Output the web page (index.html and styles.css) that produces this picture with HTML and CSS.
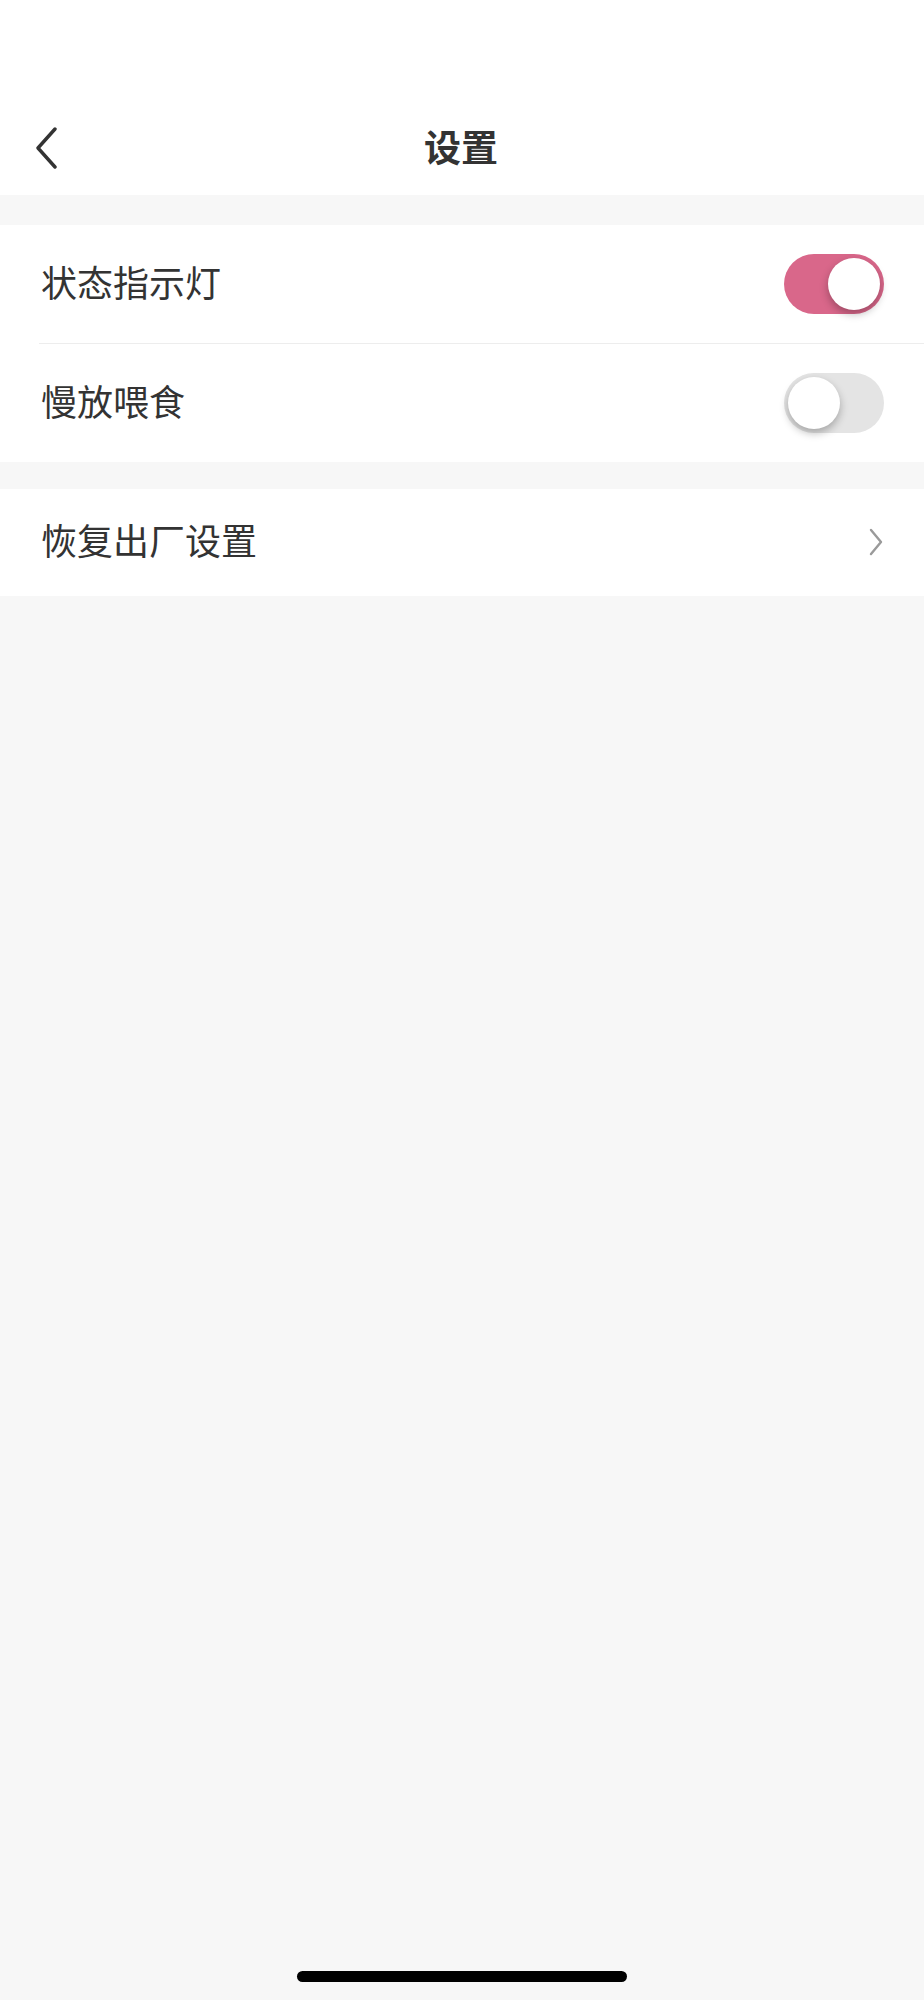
FILE: index.html
```html
<!DOCTYPE html>
<html lang="zh-CN">
<head>
<meta charset="utf-8">
<title>设置</title>
<link rel="stylesheet" href="styles.css">
</head>
<body>
<div class="screen">
  <header class="header">
    <div class="statusbar"></div>
    <nav class="nav">
      <span class="back">
        <svg width="24" height="42" viewBox="0 0 24 42"><polyline points="20,2 3,21 20,40" fill="none" stroke="#333" stroke-width="3.4" stroke-linecap="round" stroke-linejoin="round"/></svg>
      </span>
      <h1 class="title">设置</h1>
    </nav>
  </header>

  <section class="group group-first">
    <div class="row row-tall">
      <span class="label">状态指示灯</span>
      <span class="toggle on"><span class="knob"></span></span>
    </div>
    <div class="divider"></div>
    <div class="row row-tall">
      <span class="label">慢放喂食</span>
      <span class="toggle"><span class="knob"></span></span>
    </div>
  </section>

  <section class="group group-second">
    <div class="row row-short">
      <span class="label">恢复出厂设置</span>
      <span class="chev">
        <svg width="16" height="28" viewBox="0 0 16 28"><polyline points="3,2 13,14 3,26" fill="none" stroke="#9a9a9a" stroke-width="2.4" stroke-linecap="round" stroke-linejoin="round"/></svg>
      </span>
    </div>
  </section>

  <div class="spacer"></div>
  <div class="home-bar"></div>
</div>
</body>
</html>
```

FILE: styles.css
```css
html, body {
  margin: 0;
  padding: 0;
  background: #f7f7f7;
}
body {
  font-family: "PingFang SC", "Noto Sans CJK SC", "Noto Sans", sans-serif;
  color: #333;
}
.screen {
  width: 924px;
  height: 2000px;
  display: flex;
  flex-direction: column;
  background: #f7f7f7;
}
.header {
  background: #fff;
}
.statusbar {
  height: 100px;
}
.nav {
  height: 95px;
  display: flex;
  align-items: center;
  justify-content: center;
  position: relative;
}
.back {
  position: absolute;
  left: 35px;
  top: 27px;
  display: flex;
}
.title {
  margin: 0;
  font-size: 37px;
  font-weight: 700;
  color: #333;
  line-height: 1;
  margin-top: -2px;
  margin-left: -2px;
}
.group {
  background: #fff;
}
.group-first {
  margin-top: 30px;
}
.group-second {
  margin-top: 27px;
}
.row {
  display: flex;
  align-items: center;
  justify-content: space-between;
  padding: 0 40px 0 41px;
}
.row-tall {
  height: 118px;
}
.row-short {
  height: 107px;
}
.label {
  font-size: 36px;
  line-height: 1;
  color: #333;
  margin-top: -7px;
}
.divider {
  height: 1px;
  background: #ededed;
  margin-left: 39px;
}
.toggle {
  width: 100px;
  height: 60px;
  border-radius: 30px;
  background: #e4e4e4;
  position: relative;
  display: block;
}
.toggle.on {
  background: #d9678a;
}
.knob {
  position: absolute;
  top: 4px;
  left: 4px;
  width: 52px;
  height: 52px;
  border-radius: 50%;
  background: #fff;
  box-shadow: 0 4px 8px rgba(0, 0, 0, 0.28);
}
.toggle.on .knob {
  left: 44px;
}
.chev {
  display: flex;
  margin-top: -2px;
}
.spacer {
  flex: 1;
}
.home-bar {
  width: 330px;
  height: 11px;
  border-radius: 6px;
  background: #000;
  align-self: center;
  margin-bottom: 18px;
}
```
